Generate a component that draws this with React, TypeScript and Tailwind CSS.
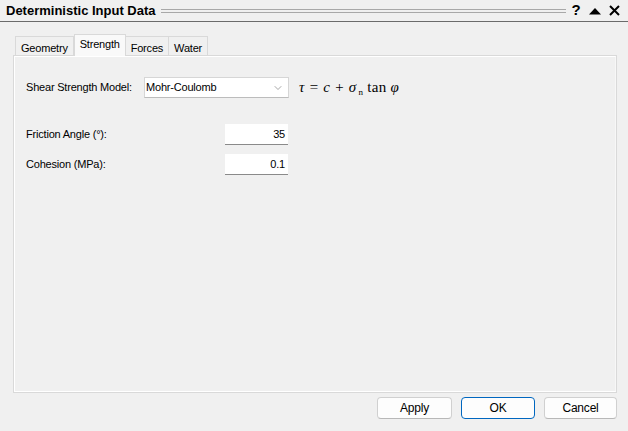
import React from 'react';
import { ChevronDown } from 'lucide-react';

const tabs = ['Geometry', 'Strength', 'Forces', 'Water'];

function Tab({ label, active }: { label: string; active: boolean }) {
  if (active) {
    return (
      <div className="h-[22px] px-[5px] pt-[1px] -mb-px relative z-10 bg-[#f9f9f9] border-t border-x border-[#d9d9d9] flex items-start">
        {label}
      </div>
    );
  }
  return (
    <div className="h-[19px] px-[5px] pt-[3px] bg-[#f0f0f0] border-t border-x border-[#d9d9d9] -ml-px first:ml-0 flex items-start">
      {label}
    </div>
  );
}

function Field({ label, value }: { label: string; value: string }) {
  return (
    <div className="flex items-center h-[21px]">
      <span className="w-[199px]">{label}</span>
      <div className="w-[63px] h-[21px] bg-white border-b border-[#8a8a8a] text-right pr-[3px] leading-[21px]">{value}</div>
    </div>
  );
}

export default function App() {
  return (
    <div
      className="w-[628px] h-[431px] bg-[#f0f0f0] flex flex-col text-[11px] tracking-[-0.2px] whitespace-nowrap text-black"
      style={{ fontFamily: '"Liberation Sans", Arial, sans-serif' }}
    >
      {/* header */}
      <div className="h-[22px] flex items-center pl-[6px] pr-[5px] border-b border-[#6b6b6b] shrink-0">
        <span className="font-bold text-[13px] tracking-[0px]">Deterministic Input Data</span>
        <div className="flex-1 mx-[5px] h-[4px] border-y border-[#a8a8a8] mt-[1px]" />
        <div className="flex items-center gap-[8px] font-bold text-[15px]">
          <span className="w-[10px] text-center">?</span>
          <svg width="12" height="8" viewBox="0 0 12 8">
            <path d="M0 7.5 L6 1 L12 7.5 Z" fill="#000" />
          </svg>
          <svg width="11" height="11" viewBox="0 0 11 11" className="mr-[3px]">
            <path d="M1 1 L10 10 M10 1 L1 10" stroke="#000" strokeWidth="2" />
          </svg>
        </div>
      </div>

      {/* tabs */}
      <div className="mt-[11px] pl-[15px] flex items-end h-[22px] shrink-0">
        {tabs.map((t) => (
          <Tab key={t} label={t} active={t === 'Strength'} />
        ))}
      </div>

      {/* panel */}
      <div className="mx-[13px] w-[604px] h-[338px] border border-[#d9d9d9] shrink-0">
        <div className="h-full border border-white border-r-[#f7f7f7] pl-[11px] pt-[20px]">
          <div className="flex items-center h-[21px]">
            <span className="w-[118px]">Shear Strength Model:</span>
            <div className="w-[145px] h-[21px] bg-white border border-[#d6d6d6] border-b-[#bcbcbc] flex items-center pl-[1px] pr-[4px]">
              <span className="flex-1">Mohr-Coulomb</span>
              <ChevronDown className="w-[12px] h-[12px] text-[#6b6b6b]" strokeWidth={1.2} />
            </div>
            <span
              className="ml-[10px] text-[15px] italic tracking-[0.3px] text-black"
              style={{ fontFamily: '"Liberation Serif", "Times New Roman", serif' }}
            >
              τ = c + σ<sub className="text-[9px] not-italic ml-[2px]">n</sub>{' '}
              <span className="not-italic">tan</span> φ
            </span>
          </div>

          <div className="mt-[26px] flex flex-col gap-[9px]">
            <Field label="Friction Angle (°):" value="35" />
            <Field label="Cohesion (MPa):" value="0.1" />
          </div>
        </div>
      </div>

      {/* buttons */}
      <div className="mt-[4px] flex justify-end gap-[9px] pr-[11px] text-[12px]">
        <button className="w-[75px] h-[22px] rounded-[4px] bg-[#fdfdfd] border border-[#d0d0d0] border-b-[#b8b8b8]">Apply</button>
        <button className="w-[74px] h-[22px] rounded-[4px] bg-[#fdfdfd] border border-[#0067c0]">OK</button>
        <button className="w-[73px] h-[22px] rounded-[4px] bg-[#fdfdfd] border border-[#d0d0d0] border-b-[#b8b8b8]">Cancel</button>
      </div>
    </div>
  );
}
